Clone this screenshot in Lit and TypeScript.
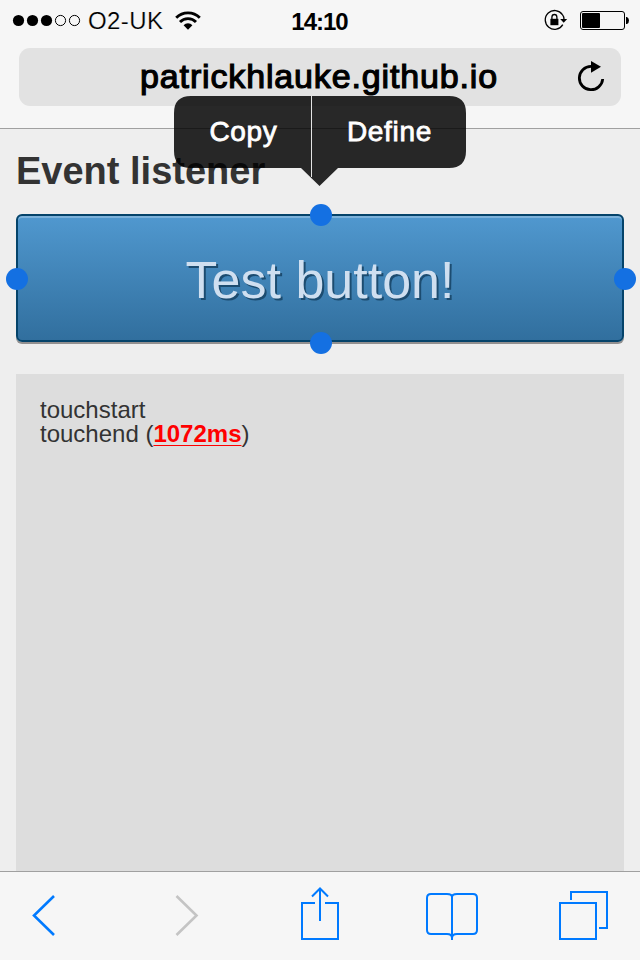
import { LitElement, html, css } from "lit";
import { customElement } from "lit/decorators.js";

@customElement("status-bar")
class StatusBar extends LitElement {
  static styles = css`
    :host { display: flex; height: 40px; align-items: center; color: #000; position: relative; box-sizing: border-box; padding: 0 11px 0 12px; }
    .signal { display: flex; }
    .carrier { font-size: 24px; line-height: 40px; padding-top: 2px; margin-left: 7px; letter-spacing: 0.4px; -webkit-text-stroke: 0.2px #f6f6f6; }
    .wifi { margin-left: 11.500px; margin-top: 1px; }
    .time { position: absolute; left: 0; right: 1px; top: 2px; text-align: center; font-size: 24px; line-height: 40px; font-weight: bold; letter-spacing: -1px; }
    .right { margin-left: auto; display: flex; align-items: center; gap: 12px; }
    svg { display: block; }
  `;
  render() {
    return html`
      <svg class="signal" width="69" height="40" viewBox="0 0 69 40">
        <g><circle cx="6.5" cy="20.5" r="5.6" /><circle cx="20.5" cy="20.5" r="5.6" /><circle cx="34.5" cy="20.5" r="5.6" /></g>
        <g fill="none" stroke="#000" stroke-width="1"><circle cx="48.5" cy="20.5" r="5.1" /><circle cx="62.5" cy="20.5" r="5.1" /></g>
      </svg>
      <span class="carrier">O2-UK</span>
      <svg class="wifi" width="26" height="40" viewBox="0 0 26 40">
        <g fill="none" stroke="#000" stroke-width="2.8">
          <path d="M1.2 16.8 A16.5 16.5 0 0 1 24.8 16.8" /><path d="M5 21 A11 11 0 0 1 21 21" />
        </g>
        <path d="M8.6 24.2 A6.2 6.2 0 0 1 17.4 24.2 L13 28.8Z" />
      </svg>
      <span class="time">14:10</span>
      <div class="right">
        <svg width="24" height="40" viewBox="0 0 24 40">
          <path d="M18.8 24.600 A9.4 9.4 0 1 1 18.4 14.600" fill="none" stroke="#000" stroke-width="1.3" />
          <path d="M18.3 14.400Q20 16.500 20 19.5" fill="none" stroke="#000" stroke-width="1.3" />
          <path d="M16.2 19H23.2L19.7 22.800Z" />
          <rect x="6.4" y="18.800" width="8" height="6.4" />
          <path d="M7.9 19V17.3A2.5 2.8 0 0 1 12.9 17.3V19" fill="none" stroke="#000" stroke-width="1.3" />
        </svg>
        <svg width="49" height="40" viewBox="0 0 49 40">
          <rect x="0.5" y="11.5" width="44" height="18" rx="2.5" fill="none" stroke="#000" />
          <rect x="2" y="13" width="18" height="15" rx="1" />
          <path d="M46 17H47Q49 18 49 20.5Q49 23 47 24H46Z" />
        </svg>
      </div>`;
  }
}

@customElement("address-bar")
class AddressBar extends LitElement {
  static styles = css`
    :host { display: block; padding: 8px 19px 22px; border-bottom: 1px solid #a0a0a0; }
    .field { height: 58px; border-radius: 11px; background: #e2e2e2; display: flex; align-items: center; justify-content: center; position: relative; }
    .url { font-size: 34px; line-height: 58px; margin: -2px 2px 0 0; letter-spacing: 0.85px; color: #000; -webkit-text-stroke: 1.2px #000; }
    .reload { position: absolute; right: 14px; top: 9px; }
  `;
  render() {
    return html`<div class="field">
      <span class="url">patrickhlauke.github.io</span>
      <svg class="reload" width="32" height="40" viewBox="0 0 32 40">
        <path d="M16 9.3 A11.7 11.7 0 1 0 27.7 22" fill="none" stroke="#000" stroke-width="2.8" />
        <path d="M16 4V15.8L26 9.8Z" />
      </svg>
    </div>`;
  }
}

@customElement("callout-menu")
class CalloutMenu extends LitElement {
  static styles = css`
    :host { display: block; width: 292px; height: 90px; }
    .bubble { position: absolute; inset: 0; }
    .items { position: relative; display: grid; grid-template-columns: 139px 153px; height: 72px; line-height: 72px; color: #fff; text-align: center; font-size: 28px; letter-spacing: 0.7px; -webkit-text-stroke: 0.8px #fff; }
  `;
  render() {
    return html`
      <svg class="bubble" width="292" height="90" viewBox="0 0 292 90">
        <path fill="#000" fill-opacity="0.84" d="M17 0H275Q292 0 292 17V55Q292 72 275 72H164L145.500 90L127 72H17Q0 72 0 55V17Q0 0 17 0Z" />
        <rect x="137" y="0" width="1" height="81" fill="#e4e4e4" />
      </svg>
      <div class="items"><span>Copy</span><span>Define</span></div>`;
  }
}

@customElement("tool-bar")
class ToolBar extends LitElement {
  static styles = css`
    :host { display: flex; box-sizing: border-box; height: 89px; border-top: 1px solid #a0a0a0; background: #f6f6f6; align-items: flex-start; padding: 14px 31px 0; }
    svg { display: block; flex: none; fill: none; stroke: #007aff; stroke-width: 2; }
    .off { stroke: #c4c4c4; }
    .thick { stroke-width: 2.6; }
    .fwd { margin-left: 117px; }
    .share { margin-left: 100px; }
    .book { margin-left: 86px; }
    .tabs { margin-left: 80px; }
  `;
  render() {
    return html`
      <svg class="thick" width="26" height="60" viewBox="0 0 26 60"><path d="M23 10L3 29.500L23 49" /></svg>
      <svg class="thick off fwd" width="26" height="60" viewBox="0 0 26 60"><path d="M2.500 10L22.500 29.500L2.500 49" /></svg>
      <svg class="share" width="40" height="60" viewBox="0 0 40 60">
        <path d="M15 17H2V53H38V17H25M20 35V3M12 10.500L20 2.500L28 10.500" />
      </svg>
      <svg class="book" width="52" height="60" viewBox="0 0 52 60">
        <path d="M26 54V11Q26 8 21 8H5Q1 8 1 12V44Q1 48 5 48H21Q26 48 26 52M26 11Q26 8 31 8H47Q51 8 51 12V44Q51 48 47 48H31Q26 48 26 52" />
      </svg>
      <svg class="tabs" width="50" height="60" viewBox="0 0 50 60"><path d="M2 17H38V53H2ZM13 14V6H49V42H41" /></svg>`;
  }
}

@customElement("app-root")
class AppRoot extends LitElement {
  static styles = css`
    :host { display: flex; flex-direction: column; position: relative; width: 640px; height: 960px; overflow: hidden; background: #eee; font-family: "Liberation Sans", Arial, sans-serif; }
    .chrome { background: #f6f6f6; }
    main { flex: 1; min-height: 0; display: flex; flex-direction: column; padding: 20px 16px 0; color: #333; }
    h1 { margin: 0; font-size: 38px; line-height: 44px; font-weight: bold; }
    .target { position: relative; margin-top: 21px; height: 128px; flex: none; }
    button { display: block; width: 100%; height: 128px; box-sizing: border-box; padding: 4px 0 0; margin: 0; border: 2px solid #04436a; border-radius: 6px; background: linear-gradient(#5098cf, #316f9e); box-shadow: inset 0 2px 0 rgba(255,255,255,0.25), 0 2px 0 #929090; font: 52px "Liberation Sans", Arial, sans-serif; color: #cfdff0; text-shadow: 2px 2px 0 #1c4c70; }
    .dot { position: absolute; width: 22px; height: 22px; border-radius: 50%; background: #1470e2; }
    .top { left: 294px; top: -10px; }
    .bottom { left: 294px; top: 118px; }
    .left { left: -10px; top: 54px; }
    .right { left: 598px; top: 54px; }
    .log { flex: 1; margin-top: 32px; padding: 24px; background: #ddd; font-size: 24px; line-height: 24px; }
    .ms { color: #f00; font-weight: bold; text-decoration: underline 1px; text-underline-offset: 3px; text-decoration-skip-ink: none; }
    callout-menu { position: absolute; left: 174px; top: 96px; }
  `;
  render() {
    return html`
      <div class="chrome"><status-bar></status-bar><address-bar></address-bar></div>
      <main>
        <h1>Event listener</h1>
        <div class="target">
          <button>Test button!</button>
          ${["top", "right", "bottom", "left"].map((s) => html`<i class="dot ${s}"></i>`)}
        </div>
        <div class="log">touchstart<br />touchend (<span class="ms">1072ms</span>)</div>
      </main>
      <tool-bar></tool-bar>
      <callout-menu></callout-menu>`;
  }
}
